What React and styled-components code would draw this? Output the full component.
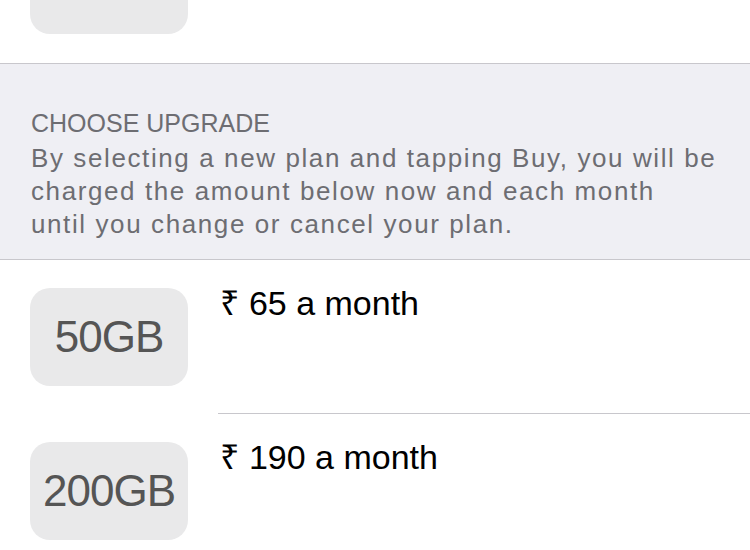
import React from 'react';
import styled, { createGlobalStyle } from 'styled-components';

const GlobalStyle = createGlobalStyle`
	html, body {
		margin: 0;
		padding: 0;
		background: #fff;
		overflow: hidden;
	}
	body {
		font-family: 'Liberation Sans', Arial, 'Noto Sans', sans-serif;
		-webkit-font-smoothing: antialiased;
	}
`;

const plans = [
	{ size: '50GB', price: '65' },
	{ size: '200GB', price: '190' },
];

const App = () => {
	return (
		<>
			<GlobalStyle />
			<Screen>
				<CurrentRow>
					<Tile>5GB</Tile>
					<Price>Free</Price>
				</CurrentRow>
				<SectionHeader>
					<HeaderTitle>CHOOSE UPGRADE</HeaderTitle>
					<HeaderText>
						By selecting a new plan and tapping Buy, you will be
						<br />
						charged the amount below now and each month
						<br />
						until you change or cancel your plan.
					</HeaderText>
				</SectionHeader>
				<PlanList>
					{plans.map((plan, i) => (
						<PlanRow key={plan.size}>
							<Tile spaced>{plan.size}</Tile>
							<PlanInfo last={i === plans.length - 1}>
								<Price>₹ {plan.price} a month</Price>
							</PlanInfo>
						</PlanRow>
					))}
				</PlanList>
			</Screen>
		</>
	);
};

// content is scrolled up, so the first row is partly hidden
const Screen = styled.div`
	width: 750px;
	margin-top: -92px;
	display: flex;
	flex-direction: column;
`;

const CurrentRow = styled.div`
	display: flex;
	align-items: flex-start;
	gap: 32px;
	padding: 28px 0 29px 30px;
	border-bottom: 1px solid #c8c7cc;
`;

const Tile = styled.div`
	flex: 0 0 158px;
	height: 98px;
	margin: ${props => (props.spaced ? '28px 0' : '0')};
	border-radius: 20px;
	background: #e9e9ea;
	color: #555555;
	font-size: 44px;
	letter-spacing: -1px;
	display: flex;
	align-items: center;
	justify-content: center;
`;

const SectionHeader = styled.div`
	background: #efeff4;
	padding: 43px 20px 18px 31px;
	border-bottom: 1px solid #c8c7cc;
	color: #6d6d72;
`;

const HeaderTitle = styled.div`
	font-size: 25px;
	line-height: 33px;
	margin-bottom: 2px;
`;

const HeaderText = styled.p`
	margin: 0;
	font-size: 26px;
	line-height: 33px;
	letter-spacing: 1.6px;
	white-space: nowrap;
`;

const PlanList = styled.div`
	display: flex;
	flex-direction: column;
	padding-left: 30px;
`;

const PlanRow = styled.div`
	display: flex;
	align-items: stretch;
	gap: 30px;
`;

const PlanInfo = styled.div`
	flex: 1;
	padding: 26px 0 0 2px;
	border-bottom: ${props => (props.last ? 'none' : '1px solid #c8c7cc')};
`;

const Price = styled.div`
	font-size: 34px;
	line-height: 34px;
	color: #000;
`;

export default App;
